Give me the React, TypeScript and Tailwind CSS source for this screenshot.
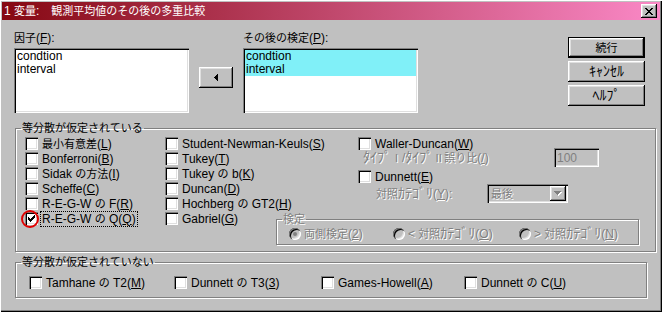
import React from 'react';

// pixel glyphs used for the tiny win98 marks
const CLOSE_X = ['XX....XX', '.XX..XX.', '..XXXX..', '...XX...', '..XXXX..', '.XX..XX.', 'XX....XX'];
const CHECK = ['......X', '.....XX', 'X...XXX', 'XX.XXX.', 'XXXXX..', '.XXX...', '..X....'];
const LEFT = ['...X', '..XX', '.XXX', 'XXXX', '.XXX', '..XX', '...X'];
const DOWN = ['XXXXXXX', '.XXXXX.', '..XXX..', '...X...'];

const SUNKEN = 'shadow-[inset_1px_1px_0_#808080,inset_2px_2px_0_#000,inset_-1px_-1px_0_#fff,inset_-2px_-2px_0_#dfdfdf]';
const RAISED = 'shadow-[inset_-1px_-1px_0_#000,inset_1px_1px_0_#fff,inset_-2px_-2px_0_#808080,inset_2px_2px_0_#dfdfdf]';
const DEFBTN = 'shadow-[inset_0_0_0_1px_#000,inset_-2px_-2px_0_#000,inset_2px_2px_0_#fff,inset_-3px_-3px_0_#808080,inset_3px_3px_0_#dfdfdf]';
const ETCH = 'border border-[#808080] shadow-[inset_1px_1px_0_#fff,1px_1px_0_#fff]';
const DIS = 'text-[#808080] [text-shadow:1px_1px_0_#fff]';

// half-width kana get their own run: noto draws them narrow, so bump them up
const CJK = /([\uff61-\uff9f]+|[\u2160-\u217f\u3000-\u30ff\u4e00-\u9fff\uff00-\uff60\uffa0-\uffef]+)/;
const HALF = /^[\uff61-\uff9f]/;

function Txt({ s }: { s: string }) {
  const parts = s.split(CJK);
  return (
    <>
      {parts.map((p, i) =>
        i % 2 === 1 ? (
          <span key={i} className={HALF.test(p) ? 'text-[14px]' : 'text-[11px]'}>{p}</span>
        ) : (
          <React.Fragment key={i}>{p}</React.Fragment>
        )
      )}
    </>
  );
}

function Key({ t, k, tail = '' }: { t: string; k: string; tail?: string }) {
  return (
    <>
      <Txt s={t} />(<u className="underline-offset-[1px]">{k}</u>)<Txt s={tail} />
    </>
  );
}

function Pix({ rows, color, shadow }: { rows: string[]; color: string; shadow?: string }) {
  const w = rows[0].length;
  const h = rows.length;
  const off = shadow ? 1 : 0;
  const cells = (fill: string, d: number) =>
    rows.flatMap((r, y) =>
      [...r].map((c, x) =>
        c === 'X' ? <rect key={`${fill}${x}-${y}`} x={x + d} y={y + d} width={1} height={1} fill={fill} /> : null
      )
    );
  return (
    <svg width={w + off} height={h + off} shapeRendering="crispEdges" className="block">
      {shadow && cells(shadow, 1)}
      {cells(color, 0)}
    </svg>
  );
}

function Box({ checked }: { checked?: boolean }) {
  return (
    <span className={`flex h-[13px] w-[13px] shrink-0 items-center justify-center bg-white ${SUNKEN}`}>
      {checked && <Pix rows={CHECK} color="#000" />}
    </span>
  );
}

function Check({ children, checked, className = '' }: { children: React.ReactNode; checked?: boolean; className?: string }) {
  return (
    <div className={`flex h-[15px] items-center gap-[4px] whitespace-nowrap ${className}`}>
      <Box checked={checked} />
      <span className="leading-[12px]">{children}</span>
    </div>
  );
}

function Radio({ on, children, className = '' }: { on?: boolean; children: React.ReactNode; className?: string }) {
  return (
    <div className={`flex items-center gap-[3px] whitespace-nowrap ${className}`}>
      <span className={`flex h-[12px] w-[12px] shrink-0 items-center justify-center rounded-full bg-[#c0c0c0] ${SUNKEN}`}>
        {on && <span className="h-[4px] w-[4px] rounded-full bg-[#808080]" />}
      </span>
      <span className={`leading-[12px] ${DIS}`}>{children}</span>
    </div>
  );
}

export default function App() {
  return (
    <div className="relative h-[312px] w-[662px] overflow-hidden bg-[#c0c0c0] p-[2px] font-['Liberation_Sans','Noto_Sans_CJK_JP',sans-serif] text-[12px] leading-[12px] text-black shadow-[inset_1px_1px_0_#fff,inset_-1px_-1px_0_#000,inset_-2px_-2px_0_#808080]">
      {/* title bar */}
      <div className="flex h-[18px] items-center justify-between bg-linear-to-r/srgb from-[#860812] to-[#fa88c6] pl-[2px] text-white">
        <span className="whitespace-nowrap leading-[14px]">
          <Txt s="1 変量:" />
          <span className="ml-[12px]">
            <Txt s="観測平均値のその後の多重比較" />
          </span>
        </span>
        <button className={`mr-[3px] flex h-[14px] w-[16px] items-center justify-center bg-[#c0c0c0] ${RAISED}`}>
          <Pix rows={CLOSE_X} color="#000" />
        </button>
      </div>

      {/* variable lists + buttons */}
      <div className="ml-[12px] mt-[11px] flex">
        <div className="w-[175px]">
          <div className="h-[14px] whitespace-nowrap leading-[14px]">
            <Key t="因子" k="F" tail=":" />
          </div>
          <div className={`mt-[3px] h-[65px] bg-white p-[2px] leading-[13px] ${SUNKEN}`}>
            <div className="pl-[1px]">condtion</div>
            <div className="pl-[1px]">interval</div>
          </div>
        </div>

        <button className={`ml-[10px] mt-[36px] flex h-[21px] w-[34px] items-center justify-center bg-[#c0c0c0] ${RAISED}`}>
          <Pix rows={LEFT} color="#000" />
        </button>

        <div className="ml-[10px] w-[175px]">
          <div className="h-[14px] whitespace-nowrap leading-[14px]">
            <Key t="その後の検定" k="P" tail=":" />
          </div>
          <div className={`mt-[3px] h-[65px] bg-white p-[2px] leading-[13px] ${SUNKEN}`}>
            <div className="bg-[#80f0f8] pl-[1px]">condtion</div>
            <div className="bg-[#80f0f8] pl-[1px]">interval</div>
          </div>
        </div>

        <div className="ml-[150px] mt-[6px] flex flex-col gap-[3px]">
          <button className={`h-[21px] w-[77px] bg-[#c0c0c0] ${DEFBTN}`}>
            <Txt s="続行" />
          </button>
          <button className={`h-[21px] w-[77px] bg-[#c0c0c0] ${RAISED}`}>
            <Txt s="ｷｬﾝｾﾙ" />
          </button>
          <button className={`h-[21px] w-[77px] bg-[#c0c0c0] ${RAISED}`}>
            <Txt s="ﾍﾙﾌﾟ" />
          </button>
        </div>
      </div>

      {/* equal variances assumed */}
      <fieldset className={`ml-[13px] mt-[8px] h-[131px] w-[641px] pl-[5px] ${ETCH}`}>
        <legend className="px-[1px] leading-[14px]">
          <Txt s="等分散が仮定されている" />
        </legend>
        <div className="flex pt-[1px]">
          <div className="w-[144px] pl-[4px]">
            <Check><Key t="最小有意差" k="L" /></Check>
            <Check><Key t="Bonferroni" k="B" /></Check>
            <Check><Key t="Sidak の方法" k="I" /></Check>
            <Check><Key t="Scheffe" k="C" /></Check>
            <Check><Key t="R-E-G-W の F" k="R" /></Check>
            <div className="flex h-[15px] items-center gap-[3px] whitespace-nowrap">
              <Box checked />
              <span className="px-[1px] py-[1px] leading-[12px] outline-1 outline-dotted outline-black">
                <Key t="R-E-G-W の Q" k="Q" />
              </span>
            </div>
          </div>

          <div className="flex flex-col">
            <div className="flex">
              <div className="w-[193px]">
                <Check><Key t="Student-Newman-Keuls" k="S" /></Check>
                <Check><Key t="Tukey" k="T" /></Check>
                <Check><Key t="Tukey の b" k="K" /></Check>
                <Check><Key t="Duncan" k="D" /></Check>
                <Check><Key t="Hochberg の GT2" k="H" /></Check>
              </div>
              <div className="flex flex-col">
                <Check><Key t="Waller-Duncan" k="W" /></Check>
                <div className="-mt-[3px] flex h-[19px] items-center">
                  <span className={`w-[196px] whitespace-nowrap pl-[5px] ${DIS}`}>
                    <Key t="ﾀｲﾌﾟⅠ/ﾀｲﾌﾟⅡ誤り比" k="/" />
                  </span>
                  <div className={`flex h-[19px] w-[45px] items-center pl-[3px] text-[#808080] ${SUNKEN}`}>100</div>
                </div>
                <Check className="mt-[2px]"><Key t="Dunnett" k="E" /></Check>
                <div className="flex h-[19px] items-center">
                  <span className={`w-[129px] whitespace-nowrap pl-[18px] ${DIS}`}>
                    <Key t="対照ｶﾃｺﾞﾘ" k="Y" tail=":" />
                  </span>
                  <div className={`flex h-[19px] w-[81px] items-center justify-between p-[2px] ${SUNKEN}`}>
                    <span className={`pl-[2px] ${DIS}`}><Txt s="最後" /></span>
                    <span className={`flex h-[15px] w-[16px] items-center justify-center bg-[#c0c0c0] ${RAISED}`}>
                      <Pix rows={DOWN} color="#808080" shadow="#fff" />
                    </span>
                  </div>
                </div>
              </div>
            </div>

            <div className="flex">
              <Check className="w-[111px]"><Key t="Gabriel" k="G" /></Check>
              <fieldset className={`mt-[1px] h-[33px] w-[363px] pl-[5px] ${ETCH}`}>
                <legend className={`px-[1px] leading-[14px] ${DIS}`}>
                  <Txt s="検定" />
                </legend>
                <div className="mt-[1px] flex pl-[7px]">
                  <Radio on className="w-[104px]"><Key t="両側検定" k="2" /></Radio>
                  <Radio className="w-[126px]"><Key t="< 対照ｶﾃｺﾞﾘ" k="O" /></Radio>
                  <Radio><Key t="> 対照ｶﾃｺﾞﾘ" k="N" /></Radio>
                </div>
              </fieldset>
            </div>
          </div>
        </div>
      </fieldset>

      {/* equal variances not assumed */}
      <fieldset className={`ml-[13px] mt-[3px] h-[43px] w-[632px] pl-[5px] ${ETCH}`}>
        <legend className="px-[1px] leading-[14px]">
          <Txt s="等分散が仮定されていない" />
        </legend>
        <div className="mt-[6px] flex pl-[8px]">
          <Check className="w-[145px]"><Key t="Tamhane の T2" k="M" /></Check>
          <Check className="w-[147px]"><Key t="Dunnett の T3" k="3" /></Check>
          <Check className="w-[143px]"><Key t="Games-Howell" k="A" /></Check>
          <Check><Key t="Dunnett の C" k="U" /></Check>
        </div>
      </fieldset>

      {/* red annotation ring around the checked box */}
      <div className="pointer-events-none absolute left-[21px] top-[210px] h-[18px] w-[18px] rounded-full border-2 border-[#e00000]" />
    </div>
  );
}
